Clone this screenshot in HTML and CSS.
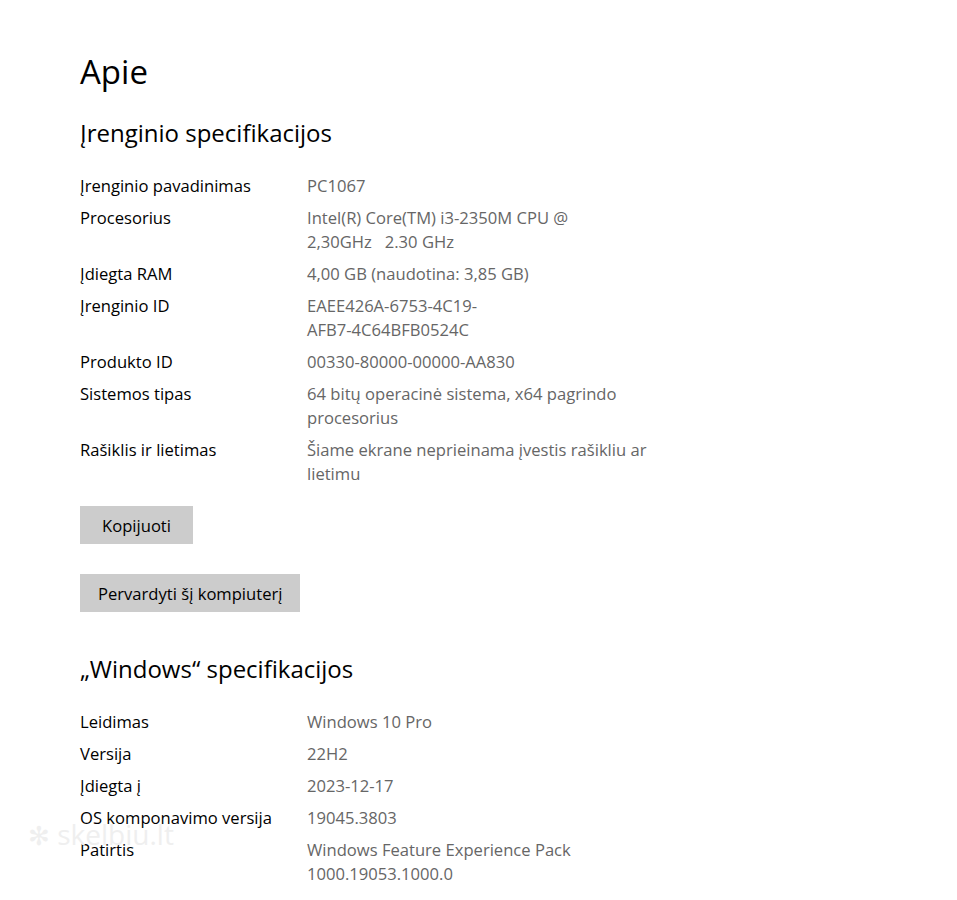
FILE: index.html
```html
<!DOCTYPE html>
<html lang="lt">
<head>
<meta charset="utf-8">
<title>Apie</title>
<link rel="stylesheet" href="styles.css">
</head>
<body>
<main class="page">
  <h1 class="title">Apie</h1>
  <h2 class="section">Įrenginio specifikacijos</h2>
  <dl class="specs">
    <div class="row"><dt>Įrenginio pavadinimas</dt><dd>PC1067</dd></div>
    <div class="row"><dt>Procesorius</dt><dd>Intel(R) Core(TM) i3-2350M CPU @<br>2,30GHz&nbsp;&nbsp; 2.30 GHz</dd></div>
    <div class="row"><dt>Įdiegta RAM</dt><dd>4,00 GB (naudotina: 3,85 GB)</dd></div>
    <div class="row"><dt>Įrenginio ID</dt><dd>EAEE426A-6753-4C19-<br>AFB7-4C64BFB0524C</dd></div>
    <div class="row"><dt>Produkto ID</dt><dd>00330-80000-00000-AA830</dd></div>
    <div class="row"><dt>Sistemos tipas</dt><dd>64 bitų operacinė sistema, x64 pagrindo<br>procesorius</dd></div>
    <div class="row"><dt>Rašiklis ir lietimas</dt><dd>Šiame ekrane neprieinama įvestis rašikliu ar<br>lietimu</dd></div>
  </dl>
  <div class="buttons">
    <button class="btn">Kopijuoti</button>
    <button class="btn">Pervardyti šį kompiuterį</button>
  </div>
  <h2 class="section section-win">„Windows“ specifikacijos</h2>
  <dl class="specs">
    <div class="row"><dt>Leidimas</dt><dd>Windows 10 Pro</dd></div>
    <div class="row"><dt>Versija</dt><dd>22H2</dd></div>
    <div class="row"><dt>Įdiegta į</dt><dd>2023-12-17</dd></div>
    <div class="row"><dt>OS komponavimo versija</dt><dd>19045.3803</dd></div>
    <div class="row"><dt>Patirtis</dt><dd>Windows Feature Experience Pack<br>1000.19053.1000.0</dd></div>
  </dl>
  <div class="watermark"><span class="wm-logo">✻</span> skelbiu.lt</div>
</main>
</body>
</html>
```
FILE: styles.css
```css
html, body {
  margin: 0;
  padding: 0;
  background: #ffffff;
}
body {
  font-family: "Open Sans", "Noto Sans", "Liberation Sans", sans-serif;
  color: #000;
}
.page {
  position: relative;
  padding: 50px 0 0 80px;
}
.title {
  margin: 0;
  font-weight: 400;
  font-size: 33px;
  line-height: 44px;
}
.section {
  margin: 23px 0 0 0;
  font-weight: 400;
  font-size: 24px;
  line-height: 32px;
}
.section-win {
  margin-top: 41px;
}
.specs {
  margin: 25px 0 0 0;
  display: flex;
  flex-direction: column;
  gap: 8px;
}
.row {
  display: grid;
  grid-template-columns: 227px 420px;
  font-size: 16.6px;
  line-height: 24px;
}
.row dt {
  margin: 0;
  color: #000;
  white-space: nowrap;
}
.row dd {
  margin: 0;
  color: #666;
  white-space: nowrap;
}
.buttons {
  margin-top: 20px;
  display: flex;
  flex-direction: column;
  align-items: flex-start;
  gap: 30px;
}
.btn {
  font-family: inherit;
  font-size: 16.6px;
  color: #000;
  background: #cccccc;
  border: none;
  height: 38px;
  min-width: 113px;
  padding: 0 18px;
}
.watermark {
  position: absolute;
  left: 28px;
  top: 816px;
  font-size: 28px;
  line-height: 36px;
  color: #efefef;
  pointer-events: none;
  white-space: nowrap;
}
.wm-logo {
  font-size: 26px;
}
```
